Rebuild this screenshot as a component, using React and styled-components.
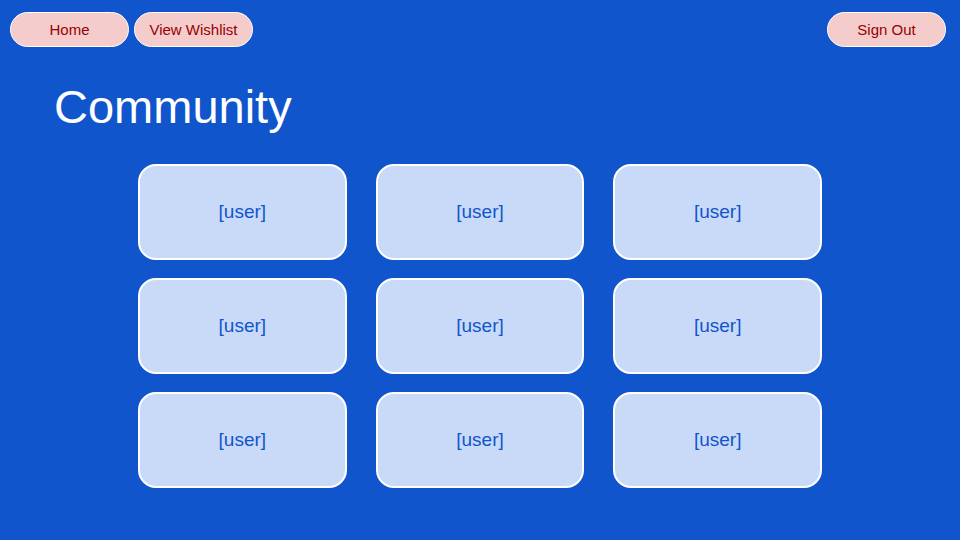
import React from "react";
import styled, { createGlobalStyle } from "styled-components";

const GlobalStyle = createGlobalStyle`
  *, *::before, *::after { box-sizing: border-box; }
  body {
    margin: 0;
    background: #1155cc;
    font-family: "Liberation Sans", Arial, sans-serif;
  }
`;

const Page = styled.div`
  min-height: 100vh;
  padding: 12px 14px 48px 10px;
  color: #ffffff;
`;

const Toolbar = styled.nav`
  display: flex;
  justify-content: space-between;
`;

const ToolbarGroup = styled.div`
  display: flex;
  gap: 5px;
`;

const PillButton = styled.button`
  width: 119px;
  height: 35px;
  padding: 0;
  border: 1px solid #ffffff;
  border-radius: 18px;
  background: #f4cccc;
  color: #990000;
  font-family: inherit;
  font-size: 15px;
  line-height: 18px;
  cursor: pointer;
`;

const Title = styled.h1`
  margin: 33px 0 30px 44px;
  font-size: 47px;
  font-weight: 400;
  line-height: 54px;
`;

const UserGrid = styled.main`
  display: grid;
  grid-template-columns: repeat(3, 1fr);
  gap: 18px 29px;
  margin: 0 124px 0 128px;
`;

const UserCard = styled.button`
  height: 96px;
  padding: 0;
  border: 2px solid #ffffff;
  border-radius: 18px;
  background: #c9daf8;
  color: #1155cc;
  font-family: inherit;
  font-size: 19px;
  line-height: 22px;
  cursor: pointer;
`;

const users = Array.from({ length: 9 }, (_, id) => ({ id, name: "[user]" }));

export default function App() {
  return (
    <>
      <GlobalStyle />
      <Page>
        <Toolbar>
          <ToolbarGroup>
            <PillButton type="button">Home</PillButton>
            <PillButton type="button">View Wishlist</PillButton>
          </ToolbarGroup>
          <PillButton type="button">Sign Out</PillButton>
        </Toolbar>
        <Title>Community</Title>
        <UserGrid>
          {users.map((user) => (
            <UserCard key={user.id} type="button">{user.name}</UserCard>
          ))}
        </UserGrid>
      </Page>
    </>
  );
}
